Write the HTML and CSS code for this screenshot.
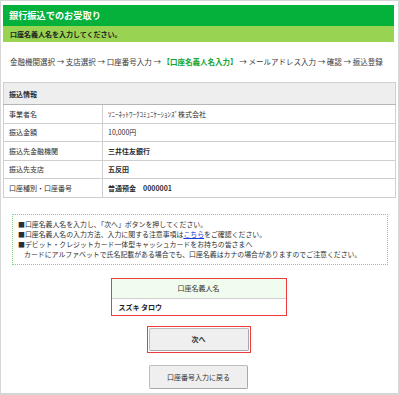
FILE: index.html
```html
<!DOCTYPE html>
<html lang="ja">
<head>
  <meta charset="UTF-8" />
  <meta name="viewport" content="width=device-width, initial-scale=1.0" />
  <title>銀行振込でのお受取り</title>
  <link rel="stylesheet" href="styles.css">
</head>
<body>
<div class="page">
  <h1 class="title">銀行振込でのお受取り</h1>
  <p class="lead">口座名義人名を入力してください。</p>

  <!-- Steps -->
  <p class="steps">金融機関選択 → 支店選択 → 口座番号入力 → <span class="current">【口座名義人名入力】</span> → メールアドレス入力 → 確認 → 振込登録</p>

  <!-- Transfer info -->
  <table class="info">
    <tr class="info-head"><th colspan="2">振込情報</th></tr>
    <tr><td class="label">事業者名</td><td>ｿﾆｰﾈｯﾄﾜｰｸｺﾐｭﾆｹｰｼｮﾝｽﾞ株式会社</td></tr>
    <tr><td class="label">振込金額</td><td>10,000円</td></tr>
    <tr><td class="label">振込先金融機関</td><td class="strong">三井住友銀行</td></tr>
    <tr><td class="label">振込先支店</td><td class="strong">五反田</td></tr>
    <tr><td class="label">口座種別・口座番号</td><td class="strong">普通預金　0000001</td></tr>
  </table>

  <div class="notice">
    <p>■口座名義人名を入力し、「次へ」ボタンを押してください。</p>
    <p>■口座名義人名の入力方法、入力に関する注意事項は<a href="#">こちら</a>をご確認ください。</p>
    <p>■デビット・クレジットカード一体型キャッシュカードをお持ちの皆さまへ</p>
    <p class="indent">カードにアルファベットで氏名記載がある場合でも、口座名義はカナの場合がありますのでご注意ください。</p>
  </div>

  <div class="name-box">
    <div class="name-head">口座名義人名</div>
    <div class="name-value">スズキ タロウ</div>
  </div>

  <div class="next-wrap">
    <button class="btn btn-next" type="button">次へ</button>
  </div>

  <button class="btn btn-back" type="button">口座番号入力に戻る</button>
</div>
</body>
</html>
```

FILE: styles.css
```css
body {
  margin: 0;
  background: #fff;
  color: #333;
  font-family: "Noto Sans CJK JP", "Noto Sans", sans-serif;
}

p {
  margin: 0;
}

.page {
  width: 400px;
  height: 395px;
  box-sizing: border-box;
  border: 1px solid #d6d6d6;
  border-width: 1px 2px 2px 1px;
  padding: 4px 4px 0 2px;
}

.title {
  margin: 0;
  height: 21px;
  line-height: 21px;
  padding-left: 6px;
  background: #03b13b;
  color: #fff;
  font-size: 9.2px;
  font-weight: bold;
}

.lead {
  height: 16px;
  line-height: 16px;
  padding-left: 7px;
  background: #99d352;
  color: #222;
  font-size: 7px;
  font-weight: bold;
}

.steps {
  margin: 15px 0 0 7px;
  line-height: 10px;
  font-size: 7.5px;
  color: #3a3a3a;
  white-space: nowrap;
}

.current {
  color: #13a52f;
  font-weight: bold;
}

.info {
  width: 393px;
  margin-top: 15px;
  border-collapse: collapse;
  border: 1px solid #bdbdbd;
  font-size: 7px;
}

.info th,
.info td {
  border: 1px solid #cfcfcf;
  padding: 0 0 0 5px;
  height: 17.5px;
  text-align: left;
  color: #2e2e2e;
}

.info-head th {
  height: 21px;
  background: #eeeeee;
  font-weight: bold;
  border-bottom-color: #b5b5b5;
}

.info .label {
  width: 93px;
}

.info .strong {
  font-weight: bold;
}

.notice {
  width: 376px;
  box-sizing: border-box;
  margin: 16px 0 0 9px;
  padding: 4px 0 5px 5px;
  border: 1px dotted #7fd47f;
  font-size: 6.9px;
  line-height: 10px;
  color: #2e2e2e;
  white-space: nowrap;
}

.notice a {
  color: #1a3cd8;
}

.notice .indent {
  padding-left: 6px;
}

.name-box {
  width: 176px;
  box-sizing: border-box;
  margin: 13px auto 0;
  border: 1.5px solid #ef3b3b;
  font-size: 7px;
}

.name-head {
  height: 19px;
  line-height: 19px;
  text-align: center;
  background: #effcee;
  border-bottom: 1px solid #cfcfcf;
  color: #333;
}

.name-value {
  height: 16px;
  line-height: 16px;
  padding-left: 7px;
  font-weight: bold;
  color: #222;
}

.next-wrap {
  width: 104px;
  height: 27px;
  box-sizing: border-box;
  margin: 10px auto 0;
  padding: 1px;
  border: 1.5px solid #ef3b3b;
}

.btn {
  display: block;
  box-sizing: border-box;
  background: #efefef;
  border: 1px solid #bdbdbd;
  border-right-color: #a8a8a8;
  border-bottom-color: #a8a8a8;
  border-radius: 2px;
  font-family: inherit;
  font-size: 7px;
  color: #333;
  padding: 0;
  cursor: pointer;
}

.btn-next {
  width: 100%;
  height: 100%;
  font-weight: bold;
}

.btn-back {
  width: 99px;
  height: 24px;
  margin: 12px auto 0;
}
```
